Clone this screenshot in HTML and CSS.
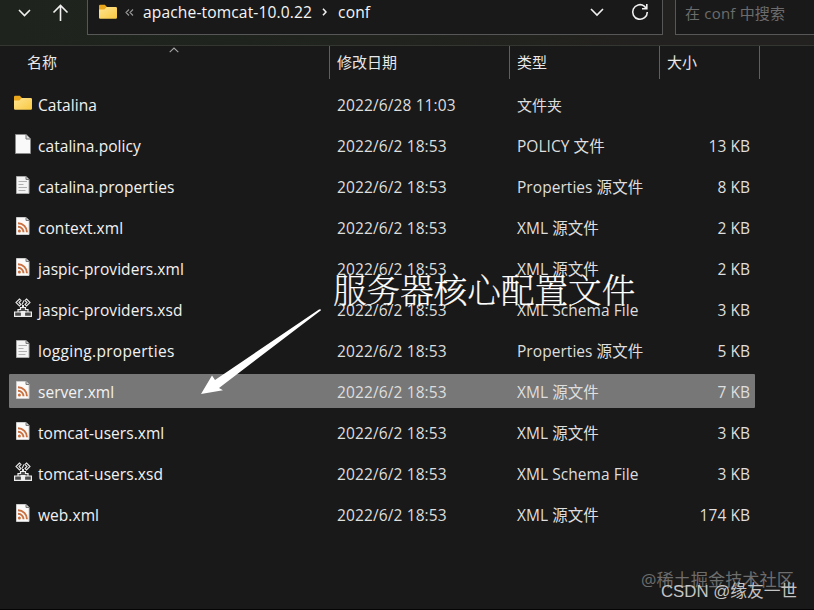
FILE: index.html
```
<!DOCTYPE html>
<html lang="zh-CN">
<head>
    <meta charset="UTF-8">
    <meta name="viewport" content="width=device-width, initial-scale=1.0">
    <title>conf</title>
    <link rel="stylesheet" href="styles.css">
</head>
<body>
    <!-- file type icons -->
    <svg class="sprite" width="0" height="0">
        <defs>
            <linearGradient id="folderFill" x1="0" y1="0" x2="1" y2="1">
                <stop offset="0" stop-color="#ffe491"/>
                <stop offset="1" stop-color="#f9c840"/>
            </linearGradient>
        </defs>
        <symbol id="folder" viewBox="0 0 18 18">
            <path d="M0 3a1.2 1.2 0 0 1 1.2-1.2h4.6L8 4H14v4H0z" fill="#eaa71c"/>
            <path d="M0 6.4h5.4L7.6 4h9.2A1.2 1.2 0 0 1 18 5.2v9.4a1.2 1.2 0 0 1-1.2 1.2H1.2A1.2 1.2 0 0 1 0 14.6z" fill="url(#folderFill)"/>
        </symbol>
        <symbol id="blank" viewBox="0 0 18 20">
            <path d="M1.5.5h10.5l4.500 4.500v14.500h-15z" fill="#f9f9f9" stroke="#8b8b8b"/>
            <path d="M12 .5v4.5h4.5" fill="#ddd" stroke="#777"/>
        </symbol>
        <symbol id="text" viewBox="0 0 18 20">
            <path d="M2.5 1.5h9.5l3 3v14h-12.5z" fill="#f4f4f4" stroke="#aaa"/>
            <path d="M12 1.5v3h3" fill="#ccc" stroke="#777"/>
            <path d="M4.5 6.5h8.500M4.500 9.500h5M4.500 12.500h8.500M4.500 15.500h7" stroke="#b0b0b0"/>
        </symbol>
        <symbol id="xml" viewBox="0 0 18 20">
            <path d="M2.5 1.5h9.5l3 3v14h-12.5z" fill="#fbfaf8" stroke="#ccc"/>
            <path d="M12 1.5v3h3" fill="#ccc" stroke="#777"/>
            <g fill="none" stroke="#cb7040" stroke-width="1.9">
                <path d="M4 7.2a9 9 0 0 1 9 9M4 10.7a5.500 5.500 0 0 1 5.500 5.500"/>
            </g>
            <circle cx="5.4" cy="14.9" r="1.5" fill="#cb7040"/>
        </symbol>
        <symbol id="xsd" viewBox="0 0 18 20">
            <g fill="none" stroke="#e4e4e4" stroke-width="1.1">
                <path d="M5.500 1L2 4.500 5.500 8 7 6.500l-2-2 2-2zM12.500 1L16 4.500 12.500 8 11 6.500l2-2-2-2z"/>
                <path d="M8 6.500l2-4"/>
            </g>
            <path d="M9 7v4" stroke="#e4e4e4" stroke-width="2"/>
            <path d="M4 14v-2.500h2.500v-2h5v2H14V14" fill="#4b4b4b" stroke="#eee" stroke-width="1.2"/>
            <path d="M.6 14h6.900v4.400H.6zM10.500 14h6.900v4.400h-6.900z" fill="#4b4b4b" stroke="#eee" stroke-width="1.2"/>
            <path d="M6.500 13h5v1.500h-1.500v4.500h-2v-4.500h-1.500z" fill="#eee"/>
        </symbol>
    </svg>

    <div class="toolbar">
        <div class="nav">
            <svg width="13" height="9" viewBox="0 0 13 9"><path d="M1 1l5.500 5.500L12 1"/></svg>
            <svg width="17" height="18" viewBox="0 0 17 18"><path d="M8.500 17V2M1.500 8.500l7-7 7 7"/></svg>
        </div>
        <div class="address">
            <svg class="icon" width="18" height="18"><use href="#folder"/></svg>
            <svg class="more" width="9" height="7" viewBox="0 0 9 7"><path d="M4 .5l-3 3 3 3M8 .5l-3 3 3 3"/></svg>
            <span class="crumb">apache-tomcat-10.0.22</span>
            <svg class="sep" width="5" height="8" viewBox="0 0 5 8"><path d="M1 .7L4 4 1 7.3"/></svg>
            <span class="crumb">conf</span>
            <svg class="drop" width="14" height="9" viewBox="0 0 14 9"><path d="M1 1l6 6 6-6"/></svg>
            <svg class="refresh" width="18" height="18" viewBox="0 0 18 18"><path d="M16.300 9A7.300 7.300 0 1 1 13.300 3.100L15.500 5.500M15.800 1v4.800H11"/></svg>
        </div>
        <div class="search">在 conf 中搜索</div>
    </div>

    <div class="columns">
        <div>名称<svg class="sort" width="10" height="6" viewBox="0 0 10 6"><path d="M.7 5.2L5 1l4.3 4.2"/></svg></div>
        <div>修改日期</div>
        <div>类型</div>
        <div>大小</div>
    </div>

    <div class="files">
        <div class="row">
            <svg class="icon" width="18" height="18"><use href="#folder"/></svg>
            <span class="name">Catalina</span><span class="date">2022/6/28 11:03</span><span class="folder-type">文件夹</span><span class="size"></span>
        </div>
        <div class="row">
            <svg class="icon" width="18" height="20"><use href="#blank"/></svg>
            <span class="name">catalina.policy</span><span class="date">2022/6/2 18:53</span><span>POLICY 文件</span><span class="size">13 KB</span>
        </div>
        <div class="row">
            <svg class="icon" width="18" height="20"><use href="#text"/></svg>
            <span class="name">catalina.properties</span><span class="date">2022/6/2 18:53</span><span>Properties 源文件</span><span class="size">8 KB</span>
        </div>
        <div class="row">
            <svg class="icon" width="18" height="20"><use href="#xml"/></svg>
            <span class="name">context.xml</span><span class="date">2022/6/2 18:53</span><span>XML 源文件</span><span class="size">2 KB</span>
        </div>
        <div class="row">
            <svg class="icon" width="18" height="20"><use href="#xml"/></svg>
            <span class="name">jaspic-providers.xml</span><span class="date">2022/6/2 18:53</span><span>XML 源文件</span><span class="size">2 KB</span>
        </div>
        <div class="row">
            <svg class="icon" width="18" height="20"><use href="#xsd"/></svg>
            <span class="name">jaspic-providers.xsd</span><span class="date">2022/6/2 18:53</span><span>XML Schema File</span><span class="size">3 KB</span>
        </div>
        <div class="row">
            <svg class="icon" width="18" height="20"><use href="#text"/></svg>
            <span class="name wide">logging.properties</span><span class="date">2022/6/2 18:53</span><span>Properties 源文件</span><span class="size">5 KB</span>
        </div>
        <div class="row selected">
            <svg class="icon" width="18" height="20"><use href="#xml"/></svg>
            <span class="name">server.xml</span><span class="date">2022/6/2 18:53</span><span>XML 源文件</span><span class="size">7 KB</span>
        </div>
        <div class="row">
            <svg class="icon" width="18" height="20"><use href="#xml"/></svg>
            <span class="name">tomcat-users.xml</span><span class="date">2022/6/2 18:53</span><span>XML 源文件</span><span class="size">3 KB</span>
        </div>
        <div class="row">
            <svg class="icon" width="18" height="20"><use href="#xsd"/></svg>
            <span class="name">tomcat-users.xsd</span><span class="date">2022/6/2 18:53</span><span>XML Schema File</span><span class="size">3 KB</span>
        </div>
        <div class="row">
            <svg class="icon" width="18" height="20"><use href="#xml"/></svg>
            <span class="name">web.xml</span><span class="date">2022/6/2 18:53</span><span>XML 源文件</span><span class="size">174 KB</span>
        </div>
    </div>

    <!-- annotation and watermarks -->
    <div class="note">服务器核心配置文件</div>
    <svg class="arrow" width="122" height="88" viewBox="0 0 122 88"><path d="M0 85L11 66.5 14 71 118 .5q2-.8 2 .8L18 79l4 2.200z"/></svg>
    <div class="mark juejin">@稀土掘金技术社区</div>
    <div class="mark csdn">CSDN @缘友一世</div>
</body>
</html>
```
FILE: styles.css
```
* {
    box-sizing: border-box;
}

body {
    margin: 0;
    width: 814px;
    height: 610px;
    overflow: hidden;
    position: relative;
    background-color: #191919;
    border-bottom: 1px solid #050505;
    color: #e8e8e8;
    font-family: "Open Sans", "Noto Sans CJK SC", sans-serif;
    font-size: 15px;
    white-space: nowrap;
}

svg {
    flex: none;
    fill: none;
    stroke: #f0f0f0;
    stroke-width: 1.6;
}

.sprite {
    position: absolute;
}

.icon {
    stroke: none;
    stroke-width: 1;
}

.toolbar {
    display: flex;
    height: 46px;
    background: linear-gradient(90deg, #1e241d, #20231e 45%, #23211f 80%);
    border-bottom: 1px solid #343632;
}

.nav {
    width: 87px;
    height: 26px;
    padding-left: 18px;
    display: flex;
    align-items: center;
    gap: 21px;
}

.address {
    width: 576px;
    height: 35px;
    padding: 0 13px 10px 11px;
    display: flex;
    align-items: center;
    background-color: #191919;
    border: 1px solid #575757;
    border-top: none;
}

.address .icon {
    margin-top: -1px;
}

.more {
    margin: 0 9px 0 8px;
    stroke: #999;
    stroke-width: 1.1;
}

.crumb {
    color: #f5f5f5;
    font-size: 15.6px;
    letter-spacing: 0.12px;
}

.sep {
    margin: 0 11px 0 10px;
}

.drop {
    margin-left: auto;
    margin-right: 27px;
}

.search {
    flex: 1;
    height: 35px;
    margin-left: 12px;
    padding-left: 9px;
    line-height: 26px;
    letter-spacing: 0.2px;
    color: #6c6c6c;
    background-color: #191919;
    border: 1px solid #575757;
    border-width: 0 0 1px 1px;
}

.columns {
    display: grid;
    grid-template-columns: 330px 180px 150px 100px;
    height: 32px;
}

.columns div {
    position: relative;
    padding-left: 7px;
    line-height: 33px;
    border-right: 1px solid #5f5f5f;
}

.columns div:first-child {
    padding-left: 27px;
}

.sort {
    position: absolute;
    left: 169px;
    top: 1px;
    stroke: #a5a5a5;
    stroke-width: 1.1;
}

.files {
    display: flex;
    flex-direction: column;
    gap: 7px;
    padding: 9px 0 0 9px;
}

.row {
    display: grid;
    grid-template-columns: 18px 305px 180px 150px 83px;
    align-items: center;
    width: 746px;
    height: 34px;
    padding-left: 5px;
    line-height: 34px;
    font-size: 15.5px;
    letter-spacing: 0.05px;
    color: #dedede;
}

.row span {
    padding-top: 1px;
}

.row .icon {
    margin-top: -3px;
}

.row .name {
    padding-left: 6px;
    color: #f2f2f2;
}

.row .wide {
    letter-spacing: 0.3px;
}

.date {
    letter-spacing: 0.12px;
}

.folder-type {
    font-size: 15px;
}

.size {
    text-align: right;
}

.selected {
    background-color: #777;
    border-radius: 1px;
}

.note {
    position: absolute;
    left: 333px;
    top: 266px;
    font-family: "Noto Serif CJK SC", "Noto Sans CJK SC", serif;
    font-size: 33.6px;
    font-weight: 100;
    line-height: 46px;
    color: #fff;
    -webkit-text-stroke: 0.25px #fff;
}

.arrow {
    position: absolute;
    left: 201px;
    top: 309px;
    fill: #fff;
    stroke: none;
}

.mark {
    position: absolute;
    line-height: 24px;
}

.juejin {
    left: 641px;
    top: 568px;
    font-size: 17.2px;
    color: #6d6d6d;
}

.csdn {
    left: 661px;
    top: 580px;
    font-family: "Liberation Sans", "Noto Sans CJK SC", sans-serif;
    font-size: 16.8px;
    color: #c4c4c4;
}
```
